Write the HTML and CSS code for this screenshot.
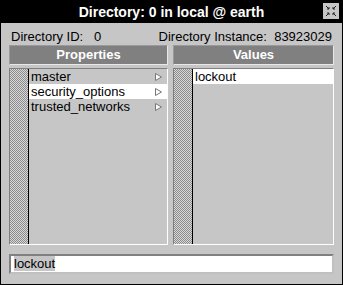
FILE: index.html
```html
<!DOCTYPE html>
<html lang="en">
<head>
    <meta charset="UTF-8">
    <title>Directory</title>
    <link rel="stylesheet" href="styles.css">
</head>
<body>
    <div class="window">
        <div class="titlebar">
            <span class="title">Directory: 0 in local @ earth</span>
            <span class="close">
                <svg width="14" height="14" viewBox="0 0 14 14">
                    <path d="M2 2 L5 5 M5 3 L5 5 L3 5" stroke="#222" fill="none"/>
                    <path d="M12 2 L9 5 M9 3 L9 5 L11 5" stroke="#222" fill="none"/>
                    <path d="M2 12 L5 9 M5 11 L5 9 L3 9" stroke="#222" fill="none"/>
                    <path d="M12 12 L9 9 M9 11 L9 9 L11 9" stroke="#222" fill="none"/>
                </svg>
            </span>
        </div>
        <div class="content">
            <div class="info">
                <span>Directory ID:&nbsp;&nbsp; 0</span>
                <span>Directory Instance:&nbsp; 83923029</span>
            </div>
            <div class="panes">
                <div class="pane left">
                    <div class="header">Properties</div>
                    <div class="list">
                        <div class="stripe"></div>
                        <div class="rows">
                            <div class="row"><span>master</span><svg class="arrow" width="7" height="8" viewBox="0 0 7 8"><path d="M0.5 0.5 L6.5 4 L0.5 7.5 Z" fill="#fff" stroke="#777"/></svg></div>
                            <div class="row selected"><span>security_options</span><svg class="arrow" width="7" height="8" viewBox="0 0 7 8"><path d="M0.5 0.5 L6.5 4 L0.5 7.5 Z" fill="#fff" stroke="#777"/></svg></div>
                            <div class="row"><span>trusted_networks</span><svg class="arrow" width="7" height="8" viewBox="0 0 7 8"><path d="M0.5 0.5 L6.5 4 L0.5 7.5 Z" fill="#fff" stroke="#777"/></svg></div>
                        </div>
                    </div>
                </div>
                <div class="pane right">
                    <div class="header">Values</div>
                    <div class="list">
                        <div class="stripe"></div>
                        <div class="rows">
                            <div class="row selected"><span>lockout</span></div>
                        </div>
                    </div>
                </div>
            </div>
            <div class="entry"><span class="sel">lockout</span></div>
        </div>
    </div>
</body>
</html>
```

FILE: styles.css
```css
body {
    margin: 0;
    font-family: "Liberation Sans", Arial, sans-serif;
    font-size: 13px;
}
.window {
    width: 343px;
    height: 285px;
    box-sizing: border-box;
    background-color: #c6c6c6;
    border: 1px solid #000;
    border-top: none;
    display: flex;
    flex-direction: column;
}
.titlebar {
    height: 23px;
    background-color: #000;
    color: #fff;
    display: flex;
    align-items: center;
    justify-content: center;
    position: relative;
}
.title {
    font-weight: bold;
    font-size: 14px;
}
.close {
    position: absolute;
    right: 3px;
    top: 3px;
    width: 16px;
    height: 16px;
    background-color: #c6c6c6;
    display: flex;
    align-items: center;
    justify-content: center;
}
.content {
    flex: 1;
    display: flex;
    flex-direction: column;
    padding: 5px 8px 8px 8px;
}
.info {
    display: flex;
    justify-content: space-between;
    padding: 0 2px 0 2px;
    height: 17px;
    line-height: 17px;
}
.panes {
    display: flex;
    gap: 5px;
    height: 200px;
}
.pane {
    flex: 1;
    display: flex;
    flex-direction: column;
}
.pane.left {
    flex: 0 0 159px;
}
.header {
    height: 18px;
    line-height: 18px;
    background-color: #808080;
    color: #fff;
    font-weight: bold;
    text-align: center;
    border: 1px solid;
    border-color: #9a9a9a #e8e8e8 #e8e8e8 #9a9a9a;
    margin-bottom: 3px;
}
.list {
    flex: 1;
    display: flex;
    border: 1px solid;
    border-color: #808080 #fff #fff #808080;
}
.stripe {
    width: 18px;
    border-right: 1px solid #000;
    background: conic-gradient(#8c8c8c 25%, #d8d8d8 0 50%, #8c8c8c 0 75%, #d8d8d8 0) 0 0 / 2px 2px;
}
.rows {
    flex: 1;
}
.row {
    height: 15px;
    line-height: 15px;
    padding-left: 2px;
    display: flex;
    justify-content: space-between;
    align-items: center;
}
.row.selected {
    background-color: #fff;
}
.arrow {
    margin-right: 5px;
}
.entry {
    margin-top: 9px;
    height: 16px;
    line-height: 16px;
    background-color: #fff;
    border: 2px solid;
    border-color: #808080 #c0c0c0 #c0c0c0 #808080;
    padding-left: 3px;
}
.sel {
    background-color: #c6c6c6;
}
```
